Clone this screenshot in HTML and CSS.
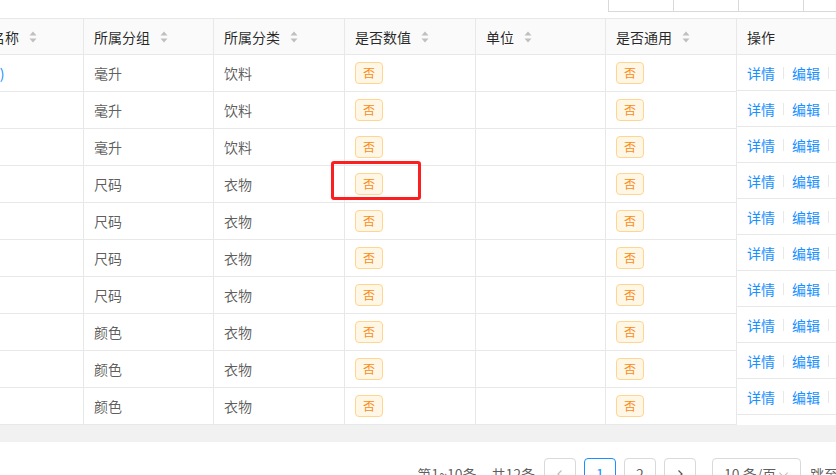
FILE: index.html
```html
<!DOCTYPE html>
<html lang="zh-CN">
<head>
    <meta charset="UTF-8">
    <title>规格列表</title>
    <link rel="stylesheet" href="styles.css">
</head>
<body>
<div class="page">
    <!-- top tool buttons (only their bottom edge is in view) -->
    <div class="toolbar">
        <span class="tool-btn"></span>
        <span class="tool-btn"></span>
        <span class="tool-btn"></span>
        <span class="tool-btn"></span>
    </div>

    <div class="table-wrap">
        <div class="table-scroll">
            <div class="grid">
                <div class="row head">
                    <div class="cell">规格名称<svg class="sorter" viewBox="0 0 8 14" width="8" height="14"><path d="M4 1.5 7.5 5.5H.5z"/><path d="M.5 8.5h7L4 12.5z"/></svg></div>
                    <div class="cell">所属分组<svg class="sorter" viewBox="0 0 8 14" width="8" height="14"><path d="M4 1.5 7.5 5.5H.5z"/><path d="M.5 8.5h7L4 12.5z"/></svg></div>
                    <div class="cell">所属分类<svg class="sorter" viewBox="0 0 8 14" width="8" height="14"><path d="M4 1.5 7.5 5.5H.5z"/><path d="M.5 8.5h7L4 12.5z"/></svg></div>
                    <div class="cell">是否数值<svg class="sorter" viewBox="0 0 8 14" width="8" height="14"><path d="M4 1.5 7.5 5.5H.5z"/><path d="M.5 8.5h7L4 12.5z"/></svg></div>
                    <div class="cell">单位<svg class="sorter" viewBox="0 0 8 14" width="8" height="14"><path d="M4 1.5 7.5 5.5H.5z"/><path d="M.5 8.5h7L4 12.5z"/></svg></div>
                    <div class="cell">是否通用<svg class="sorter" viewBox="0 0 8 14" width="8" height="14"><path d="M4 1.5 7.5 5.5H.5z"/><path d="M.5 8.5h7L4 12.5z"/></svg></div>
                    <div class="cell">操作</div>
                </div>
                <div class="row">
                    <div class="cell"><a class="link">容量(l)</a></div>
                    <div class="cell">毫升</div><div class="cell">饮料</div>
                    <div class="cell"><span class="tag">否</span></div><div class="cell"></div>
                    <div class="cell"><span class="tag">否</span></div><div class="cell"></div>
                </div>
                <div class="row">
                    <div class="cell"><a class="link">容量</a></div>
                    <div class="cell">毫升</div><div class="cell">饮料</div>
                    <div class="cell"><span class="tag">否</span></div><div class="cell"></div>
                    <div class="cell"><span class="tag">否</span></div><div class="cell"></div>
                </div>
                <div class="row">
                    <div class="cell"><a class="link">净重</a></div>
                    <div class="cell">毫升</div><div class="cell">饮料</div>
                    <div class="cell"><span class="tag">否</span></div><div class="cell"></div>
                    <div class="cell"><span class="tag">否</span></div><div class="cell"></div>
                </div>
                <div class="row">
                    <div class="cell"><a class="link">尺寸</a></div>
                    <div class="cell">尺码</div><div class="cell">衣物</div>
                    <div class="cell"><span class="tag">否</span></div><div class="cell"></div>
                    <div class="cell"><span class="tag">否</span></div><div class="cell"></div>
                </div>
                <div class="row">
                    <div class="cell"><a class="link">鞋码</a></div>
                    <div class="cell">尺码</div><div class="cell">衣物</div>
                    <div class="cell"><span class="tag">否</span></div><div class="cell"></div>
                    <div class="cell"><span class="tag">否</span></div><div class="cell"></div>
                </div>
                <div class="row">
                    <div class="cell"><a class="link">裤长</a></div>
                    <div class="cell">尺码</div><div class="cell">衣物</div>
                    <div class="cell"><span class="tag">否</span></div><div class="cell"></div>
                    <div class="cell"><span class="tag">否</span></div><div class="cell"></div>
                </div>
                <div class="row">
                    <div class="cell"><a class="link">腰围</a></div>
                    <div class="cell">尺码</div><div class="cell">衣物</div>
                    <div class="cell"><span class="tag">否</span></div><div class="cell"></div>
                    <div class="cell"><span class="tag">否</span></div><div class="cell"></div>
                </div>
                <div class="row">
                    <div class="cell"><a class="link">颜色</a></div>
                    <div class="cell">颜色</div><div class="cell">衣物</div>
                    <div class="cell"><span class="tag">否</span></div><div class="cell"></div>
                    <div class="cell"><span class="tag">否</span></div><div class="cell"></div>
                </div>
                <div class="row">
                    <div class="cell"><a class="link">色系</a></div>
                    <div class="cell">颜色</div><div class="cell">衣物</div>
                    <div class="cell"><span class="tag">否</span></div><div class="cell"></div>
                    <div class="cell"><span class="tag">否</span></div><div class="cell"></div>
                </div>
                <div class="row">
                    <div class="cell"><a class="link">花色</a></div>
                    <div class="cell">颜色</div><div class="cell">衣物</div>
                    <div class="cell"><span class="tag">否</span></div><div class="cell"></div>
                    <div class="cell"><span class="tag">否</span></div><div class="cell"></div>
                </div>
            </div>
        </div>
        <div class="scrollbar"></div>

        <!-- fixed right column -->
        <div class="fixed-right">
            <div class="cell head">操作</div>
            <div class="cell"><a class="link">详情</a><i class="divider"></i><a class="link">编辑</a><i class="divider"></i><a class="link">删除</a></div>
            <div class="cell"><a class="link">详情</a><i class="divider"></i><a class="link">编辑</a><i class="divider"></i><a class="link">删除</a></div>
            <div class="cell"><a class="link">详情</a><i class="divider"></i><a class="link">编辑</a><i class="divider"></i><a class="link">删除</a></div>
            <div class="cell"><a class="link">详情</a><i class="divider"></i><a class="link">编辑</a><i class="divider"></i><a class="link">删除</a></div>
            <div class="cell"><a class="link">详情</a><i class="divider"></i><a class="link">编辑</a><i class="divider"></i><a class="link">删除</a></div>
            <div class="cell"><a class="link">详情</a><i class="divider"></i><a class="link">编辑</a><i class="divider"></i><a class="link">删除</a></div>
            <div class="cell"><a class="link">详情</a><i class="divider"></i><a class="link">编辑</a><i class="divider"></i><a class="link">删除</a></div>
            <div class="cell"><a class="link">详情</a><i class="divider"></i><a class="link">编辑</a><i class="divider"></i><a class="link">删除</a></div>
            <div class="cell"><a class="link">详情</a><i class="divider"></i><a class="link">编辑</a><i class="divider"></i><a class="link">删除</a></div>
            <div class="cell"><a class="link">详情</a><i class="divider"></i><a class="link">编辑</a><i class="divider"></i><a class="link">删除</a></div>
        </div>

        <!-- red annotation box -->
        <div class="mark"></div>
    </div>

    <div class="pager">
        <span class="total">第1~10条<span class="total-sum">共12条</span></span>
        <span class="page-item disabled"><svg viewBox="0 0 10 10" width="10" height="10"><path d="M6.5 1.5 3 5l3.5 3.5"/></svg></span>
        <span class="page-item active">1</span>
        <span class="page-item">2</span>
        <span class="page-item"><svg viewBox="0 0 10 10" width="10" height="10"><path d="M3.5 1.5 7 5 3.5 8.5"/></svg></span>
        <span class="size-select">10 条/页<svg viewBox="0 0 12 12" width="11" height="11"><path d="M1.5 4 6 8.5 10.5 4"/></svg></span>
        <span class="jumper">跳至<span class="jump-input"></span>页</span>
    </div>
</div>
</body>
</html>
```

FILE: styles.css
```css
/* base */
body {
    margin: 0;
    font-family: "Noto Sans CJK SC", "Noto Sans", sans-serif;
    font-size: 14px;
    color: rgba(0, 0, 0, 0.65);
    background: #fff;
    overflow: hidden;
}

.page {
    width: 918px;
}

/* toolbar buttons above the table */
.toolbar {
    display: flex;
    justify-content: flex-end;
    align-items: flex-end;
    height: 12px;
    margin-right: 49px;
    overflow: hidden;
}

.tool-btn {
    width: 66px;
    height: 32px;
    margin-left: -1px;
    border: 1px solid #d9d9d9;
    box-sizing: border-box;
}

/* table */
.table-wrap {
    position: relative;
    margin-top: 6px;
    border-top: 1px solid #e8e8e8;
}

.table-scroll {
    overflow: hidden;
}

.grid {
    margin-left: -47px;
}

.row {
    display: grid;
    grid-template-columns: 131px 130px 131px 131px 130px 131px 181px;
}

.cell {
    display: flex;
    align-items: center;
    height: 37px;
    padding: 0 10px;
    box-sizing: border-box;
    border-right: 1px solid #e8e8e8;
    border-bottom: 1px solid #e8e8e8;
    white-space: nowrap;
}

.row.head .cell,
.cell.head {
    height: 36px;
    background: #fafafa;
    color: rgba(0, 0, 0, 0.85);
}

.sorter {
    margin-left: 10px;
    fill: #bfbfbf;
}

.link {
    color: #1890ff;
    cursor: pointer;
}

.tag {
    display: inline-block;
    height: 22px;
    line-height: 20px;
    padding: 0 7px;
    font-size: 12px;
    color: #fa8c16;
    background: #fff7e6;
    border: 1px solid #ffd591;
    border-radius: 4px;
    box-sizing: border-box;
}

.scrollbar {
    height: 17px;
    background: #f1f1f1;
}

/* fixed operation column */
.fixed-right {
    position: absolute;
    top: 0;
    left: 737px;
    width: 181px;
    height: 406px;
    background: #fff;
}

.fixed-right .cell {
    height: 36px;
    border-right: none;
}

.divider {
    display: inline-block;
    width: 1px;
    height: 12px;
    margin: 0 8px;
    background: #e8e8e8;
}

.mark {
    position: absolute;
    top: 142px;
    left: 331px;
    width: 90px;
    height: 39px;
    border: 3px solid #fb1f1f;
    border-radius: 3px;
    box-sizing: border-box;
}

/* pagination */
.pager {
    display: flex;
    justify-content: flex-end;
    align-items: center;
    height: 32px;
    margin-top: 16px;
    line-height: 30px;
}

.total {
    margin-right: 9px;
}

.total-sum {
    margin-left: 15px;
}

.page-item {
    display: flex;
    align-items: center;
    justify-content: center;
    width: 32px;
    height: 32px;
    margin-right: 8px;
    border: 1px solid #d9d9d9;
    border-radius: 4px;
    box-sizing: border-box;
}

.page-item svg {
    fill: none;
    stroke: rgba(0, 0, 0, 0.65);
    stroke-width: 1.3;
}

.page-item.disabled svg {
    stroke: rgba(0, 0, 0, 0.25);
}

.page-item.active {
    border-color: #1890ff;
    color: #1890ff;
}

.size-select {
    display: flex;
    align-items: center;
    justify-content: space-between;
    width: 89px;
    height: 32px;
    margin-left: 8px;
    margin-right: 9px;
    padding: 0 11px;
    border: 1px solid #d9d9d9;
    border-radius: 4px;
    box-sizing: border-box;
}

.size-select svg {
    fill: none;
    stroke: rgba(0, 0, 0, 0.25);
    stroke-width: 1.2;
}

.jumper {
    display: flex;
    align-items: center;
}

.jump-input {
    width: 50px;
    height: 32px;
    margin: 0 8px;
    border: 1px solid #d9d9d9;
    border-radius: 4px;
    box-sizing: border-box;
}
```
